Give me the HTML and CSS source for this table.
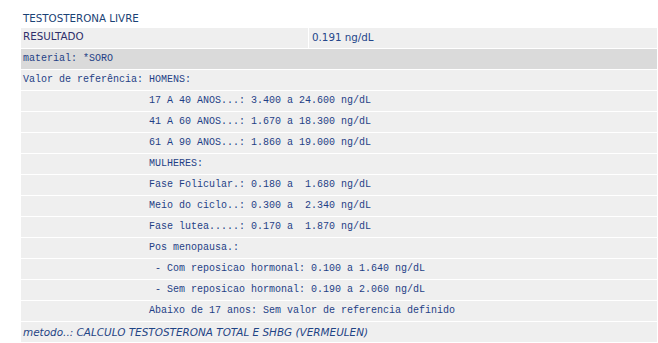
FILE: index.html
```html
<!DOCTYPE html>
<html>
<head>
<meta charset="utf-8">
<link rel="stylesheet" href="styles.css">
</head>
<body>
<div class="report">
  <div class="title">TESTOSTERONA LIVRE</div>
  <div class="row result">
    <div class="cell label">RESULTADO</div>
    <div class="cell value">0.191 ng/dL</div>
  </div>
  <div class="row mono dark">material: *SORO</div>
  <div class="row mono">Valor de referência: HOMENS:</div>
  <div class="row mono indent">17 A 40 ANOS...: 3.400 a 24.600 ng/dL</div>
  <div class="row mono indent">41 A 60 ANOS...: 1.670 a 18.300 ng/dL</div>
  <div class="row mono indent">61 A 90 ANOS...: 1.860 a 19.000 ng/dL</div>
  <div class="row mono indent">MULHERES:</div>
  <div class="row mono indent">Fase Folicular.: 0.180 a  1.680 ng/dL</div>
  <div class="row mono indent">Meio do ciclo..: 0.300 a  2.340 ng/dL</div>
  <div class="row mono indent">Fase lutea.....: 0.170 a  1.870 ng/dL</div>
  <div class="row mono indent">Pos menopausa.:</div>
  <div class="row mono indent"> - Com reposicao hormonal: 0.100 a 1.640 ng/dL</div>
  <div class="row mono indent"> - Sem reposicao hormonal: 0.190 a 2.060 ng/dL</div>
  <div class="row mono indent">Abaixo de 17 anos: Sem valor de referencia definido</div>
  <div class="row method">metodo..: CALCULO TESTOSTERONA TOTAL E SHBG (VERMEULEN)</div>
</div>
</body>
</html>
```
FILE: styles.css
```css
html, body {
  margin: 0;
  padding: 0;
  background: #ffffff;
}
.report {
  margin-left: 21px;
  width: 636px;
  padding-top: 10px;
  font-family: "DejaVu Sans", Verdana, sans-serif;
  font-size: 11px;
  color: #1d3c78;
}
.title {
  height: 17px;
  line-height: 16px;
  padding-left: 2px;
  margin-bottom: 1px;
  color: #1a4275;
  font-size: 10.3px;
}
.row {
  height: 20px;
  line-height: 19px;
  margin-bottom: 1px;
  background: #efefef;
  padding-left: 2px;
  white-space: pre;
  box-sizing: border-box;
}
.result {
  display: flex;
  gap: 1px;
  padding-left: 0;
  background: #ffffff;
}
.cell {
  background: #efefef;
  height: 20px;
  line-height: 16px;
  padding-left: 2px;
  box-sizing: border-box;
  font-size: 10.3px;
}
.label {
  width: 287px;
  color: #2e2e6a;
}
.value {
  flex: 1;
  padding-left: 3px;
  line-height: 19px;
  color: #24468a;
}
.dark {
  background: #dadada;
}
.mono {
  font-family: "Liberation Mono", "Courier New", monospace;
  font-size: 10px;
  line-height: 20px;
  color: #1f3f86;
}
.indent {
  padding-left: 128px;
}
.method {
  font-style: italic;
  font-size: 10.45px;
  line-height: 20px;
  color: #1f4485;
}
```
